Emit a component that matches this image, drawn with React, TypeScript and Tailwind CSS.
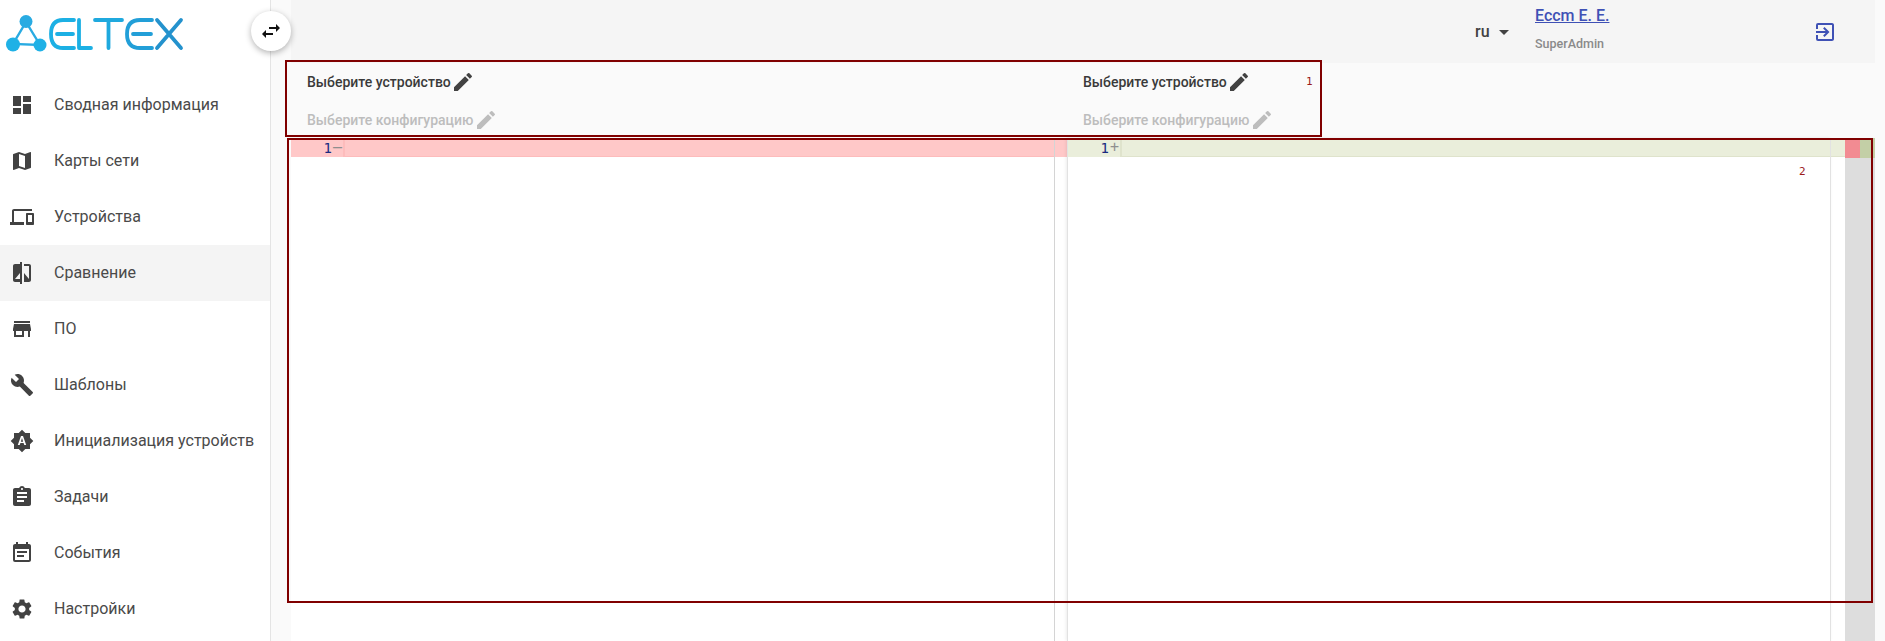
import React from "react";
import {
  MdDashboard, MdMap, MdDevices, MdCompare, MdStore, MdBuild, MdBrightnessAuto,
  MdAssignment, MdEventNote, MdSettings, MdEdit, MdSwapHoriz, MdExitToApp, MdArrowDropDown,
} from "react-icons/md";

const nav = [
  { label: "Сводная информация", Icon: MdDashboard },
  { label: "Карты сети", Icon: MdMap },
  { label: "Устройства", Icon: MdDevices },
  { label: "Сравнение", Icon: MdCompare, active: true },
  { label: "ПО", Icon: MdStore },
  { label: "Шаблоны", Icon: MdBuild },
  { label: "Инициализация устройств", Icon: MdBrightnessAuto },
  { label: "Задачи", Icon: MdAssignment },
  { label: "События", Icon: MdEventNote },
  { label: "Настройки", Icon: MdSettings },
];

function Logo() {
  return (
    <svg width="190" height="60" viewBox="0 0 190 60" className="block">
      <path d="M26 22L13 44L40 45Z" stroke="#29abe2" strokeWidth="2.4" fill="none" />
      <circle cx="26" cy="21.5" r="6.5" fill="#29abe2" />
      <circle cx="13" cy="44.5" r="7" fill="#1fb1e6" />
      <circle cx="40" cy="45" r="6.5" fill="#1fb1e6" />
      <g strokeWidth="3.8" fill="none" strokeLinecap="round" strokeLinejoin="round">
        <path d="M74 20H63Q51 20 51 34Q51 48 63 48H74M57 34H73" stroke="#1cb0e4" />
        <path d="M79 20V48H91" stroke="#1cb0e4" />
        <path d="M95 20H122M108.500 20V48" stroke="#1fa9de" />
        <path d="M152 20H140Q127 20 127 34Q127 48 140 48H152M133 34H151" stroke="#229fd8" />
        <path d="M157 20L181 48M181 20L157 48" stroke="#2492cd" />
      </g>
    </svg>
  );
}

function Selector({ device }: { device?: boolean }) {
  return (
    <div className={device ? "flex items-center text-[#3a3a3a]" : "flex items-center text-[#bdbdbd]"}>
      <span className="text-[14px] font-medium leading-6 whitespace-nowrap">
        {device ? "Выберите устройство" : "Выберите конфигурацию"}
      </span>
      <MdEdit size={24} className={device ? "text-[#424242]" : "text-[#bdbdbd] ml-[1px]"} />
    </div>
  );
}

function Pane({ sign, rowBg, gutterBorder, numWidth }: { sign: string; rowBg: string; gutterBorder: string; numWidth: string }) {
  return (
    <div className="h-[19px] flex items-stretch" style={{ backgroundColor: rowBg }}>
      <div className={numWidth + " shrink-0 flex items-center justify-end font-['DejaVu_Sans_Mono',monospace] text-[14px] text-[#1a2a80] leading-none"}>
        1
      </div>
      <div className="w-[11px] shrink-0 flex items-center justify-center text-[15px] leading-none text-[#8f8f8f] font-['DejaVu_Sans_Mono',monospace]">
        {sign}
      </div>
      <div className="flex-1 border-l-2 border-b" style={{ borderColor: gutterBorder }} />
    </div>
  );
}

export default function App() {
  return (
    <div className="relative flex h-[641px] w-[1885px] overflow-hidden bg-[#fafafa] font-['Roboto',sans-serif]">
      <aside className="w-[271px] shrink-0 bg-white border-r border-[#e4e4e4] flex flex-col">
        <div className="h-[77px] shrink-0">
          <Logo />
        </div>
        <nav className="flex flex-col">
          {nav.map(({ label, Icon, active }) => (
            <div key={label} className={"h-[56px] flex items-center pl-[10px] " + (active ? "bg-[#f4f4f4]" : "")}>
              <Icon size={24} className="text-[#424242] shrink-0" />
              <span className="ml-[20px] text-[16px] text-[#4a4a4a] whitespace-nowrap">{label}</span>
            </div>
          ))}
        </nav>
      </aside>

      <main className="flex-1 min-w-0 flex flex-col pl-[20px] pr-[10px]">
        <header className="h-[63px] shrink-0 bg-[#f5f5f5] flex items-center">
          <div className="ml-[1184px] flex items-center w-[60px]">
            <span className="text-[16px] font-medium text-[#424242]">ru</span>
            <MdArrowDropDown size={24} className="text-[#424242] ml-[2px]" />
          </div>
          <div className="flex flex-col h-full justify-start w-[74px]">
            <a className="mt-[6px] text-[16px] leading-5 font-medium text-[#3f51b5] underline whitespace-nowrap">Eccm E. E.</a>
            <span className="mt-[8px] text-[12.5px] leading-[20px] font-medium text-[#8a8a8a]">SuperAdmin</span>
          </div>
          <MdExitToApp size={24} className="text-[#3f51b5] ml-[204px]" />
        </header>

        <section className="h-[75px] shrink-0 grid grid-cols-[776px_1fr] pl-[16px] pt-[7px]">
          <div className="flex flex-col gap-[14px]">
            <Selector device />
            <Selector />
          </div>
          <div className="flex flex-col gap-[14px]">
            <Selector device />
            <Selector />
          </div>
        </section>

        <section className="flex-1 min-h-0 flex bg-white">
          <div className="w-[764px] shrink-0 border-r border-[#d4d4d4]">
            <Pane sign="—" rowBg="#ffc8c8" gutterBorder="#fdbcbc" numWidth="w-[41px]" />
          </div>
          <div className="w-[12px] shrink-0 flex flex-col">
            <div className="h-[19px] bg-[#ffc8c8]" />
          </div>
          <div className="w-[764px] shrink-0 border-l border-[#e2e2e2] shadow-[-1px_0_3px_rgba(0,0,0,0.08)] border-r">
            <Pane sign="+" rowBg="#eaeedb" gutterBorder="#dfe3cc" numWidth="w-[41px]" />
          </div>
          <div className="w-[14px] shrink-0 flex flex-col">
            <div className="h-[19px] bg-[#eaeedb] border-b border-[#dfe3cc]" />
          </div>
          <div className="w-[30px] shrink-0 bg-[#dddddd] flex flex-col">
            <div className="h-[20px] flex">
              <div className="w-[15px] bg-[#f28b92]" />
              <div className="w-[15px] bg-[#c3cfa6]" />
            </div>
          </div>
        </section>
      </main>

      <button className="absolute left-[251px] top-[11px] w-10 h-10 rounded-full bg-white shadow-[0_2px_6px_rgba(0,0,0,0.3)] flex items-center justify-center">
        <MdSwapHoriz size={24} className="text-[#111]" />
      </button>

      <div className="absolute left-[285px] top-[60px] w-[1037px] h-[77px] border-2 border-[#800000] pointer-events-none" />
      <div className="absolute left-[287px] top-[138px] w-[1586px] h-[465px] border-2 border-[#800000] pointer-events-none" />
      <span className="absolute left-[1306px] top-[75px] text-[11px] leading-[14px] text-[#9b1c1c] font-['DejaVu_Sans_Mono',monospace]">1</span>
      <span className="absolute left-[1799px] top-[165px] text-[11px] leading-[14px] text-[#9b1c1c] font-['DejaVu_Sans_Mono',monospace]">2</span>
    </div>
  );
}
